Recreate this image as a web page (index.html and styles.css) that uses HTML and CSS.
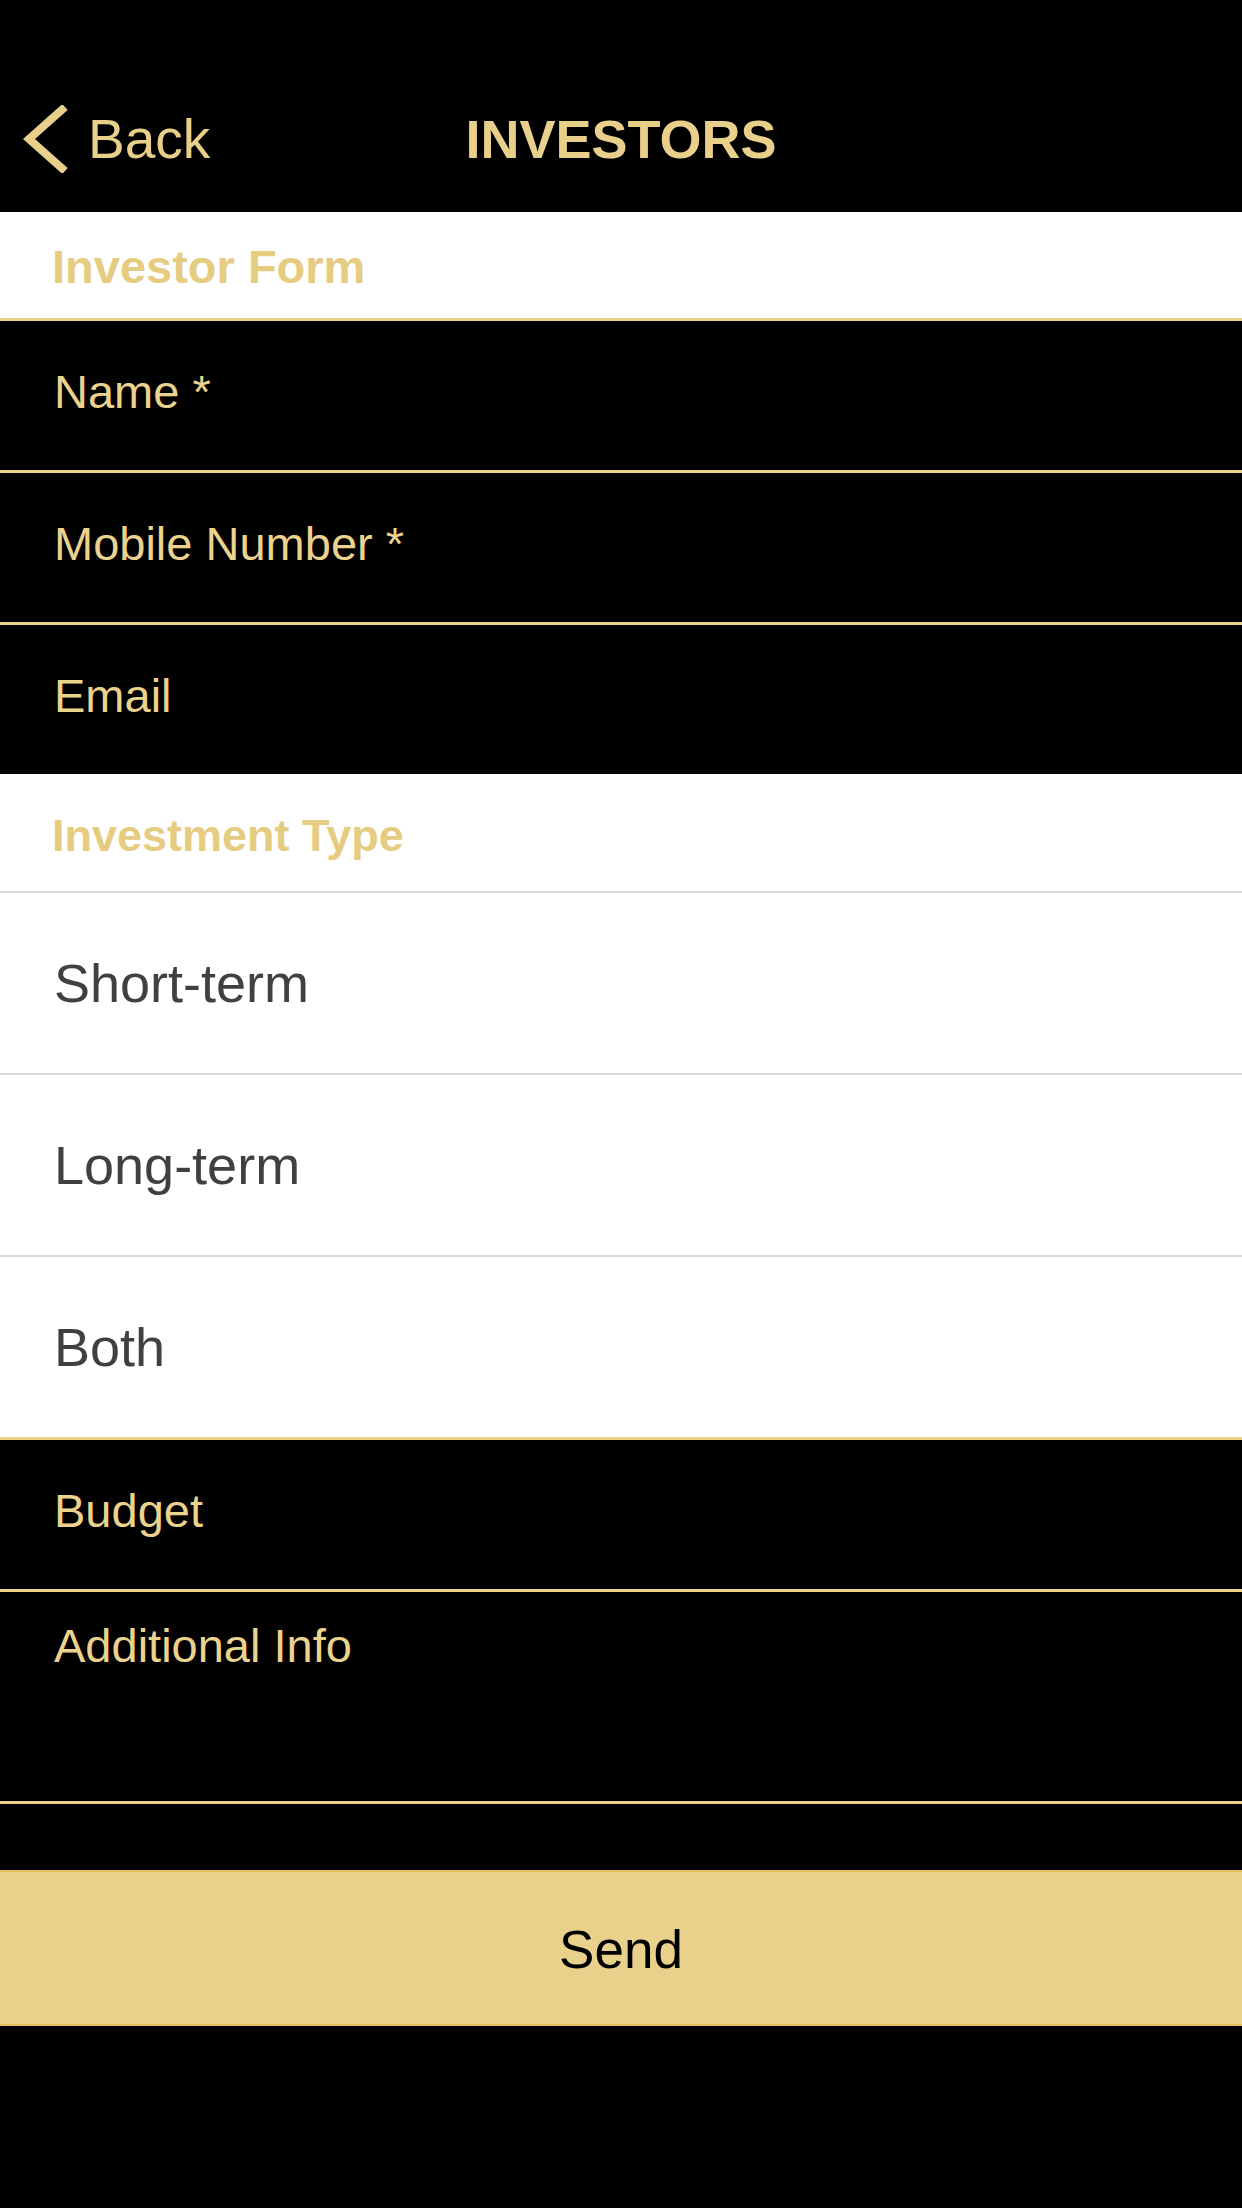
FILE: index.html
```html
<!DOCTYPE html>
<html lang="en">
<head>
  <meta charset="UTF-8" />
  <meta name="viewport" content="width=device-width, initial-scale=1.0" />
  <title>Investors</title>
  <link rel="stylesheet" href="styles.css">
</head>
<body>
  <header class="nav">
    <div class="nav-row">
      <a class="back" href="#">
        <svg class="chevron" width="46" height="68" viewBox="0 0 46 68">
          <polyline points="43,2 7,34 43,66" fill="none" stroke="#e9d08a" stroke-width="8" />
        </svg>
        <span>Back</span>
      </a>
      <h1 class="title">INVESTORS</h1>
      <span></span>
    </div>
  </header>

  <form class="form">
    <div class="section first">Investor Form</div>

    <input class="field" type="text" placeholder="Name *" />
    <input class="field" type="tel" placeholder="Mobile Number *" />
    <input class="field" type="email" placeholder="Email" />

    <div class="section second">Investment Type</div>
    <div class="options">
      <div class="option">Short-term</div>
      <div class="option">Long-term</div>
      <div class="option">Both</div>
    </div>

    <input class="field" type="text" placeholder="Budget" />
    <textarea class="field area" placeholder="Additional Info"></textarea>

    <button class="send" type="button">Send</button>
  </form>
</body>
</html>
```

FILE: styles.css
```css
body {
  margin: 0;
  background: #000;
  font-family: "Liberation Sans", Arial, Helvetica, sans-serif;
  color: #e9d08a;
}
.nav {
  height: 212px;
  padding-top: 105px;
  box-sizing: border-box;
}
.nav-row {
  display: grid;
  grid-template-columns: 1fr auto 1fr;
  align-items: center;
  height: 62px;
}
.back {
  display: flex;
  align-items: center;
  gap: 20px;
  padding-left: 22px;
  color: #e9d08a;
  text-decoration: none;
  font-size: 55px;
  line-height: 62px;
}
.title {
  margin: 0;
  font-size: 54px;
  line-height: 62px;
  font-weight: bold;
}
.section {
  background: #fff;
  color: #e6cc80;
  font-weight: bold;
  padding-left: 52px;
  box-sizing: border-box;
}
.section.first {
  height: 106px;
  padding-top: 28px;
  font-size: 47px;
  line-height: 53px;
}
.section.second {
  height: 119px;
  padding-top: 36px;
  font-size: 45px;
  line-height: 52px;
  border-bottom: 2px solid #d9d9d9;
}
.field {
  display: block;
  width: 100%;
  height: 152px;
  margin: 0;
  padding: 0 0 8px 54px;
  box-sizing: border-box;
  background: #000;
  border: none;
  border-top: 3px solid #ead187;
  font-family: inherit;
  font-size: 47px;
  color: #ebd38d;
  outline: none;
}
.field::placeholder {
  color: #ebd38d;
  opacity: 1;
}
.area {
  height: 215px;
  padding-top: 27px;
  line-height: 54px;
  resize: none;
  border-bottom: 3px solid #ead187;
}
.options {
  background: #fff;
}
.option {
  display: flex;
  align-items: center;
  height: 182px;
  padding-left: 54px;
  box-sizing: border-box;
  border-bottom: 2px solid #d9d9d9;
  font-size: 54px;
  color: #404040;
}
.option:last-child {
  height: 180px;
  border-bottom: none;
}
.send {
  display: block;
  width: 100%;
  height: 156px;
  margin-top: 66px;
  padding-top: 4px;
  background: #e9d18b;
  border: none;
  border-top: 2px solid #e3c060;
  border-bottom: 2px solid #e3c060;
  font-family: inherit;
  font-size: 53px;
  color: #000;
}
```
